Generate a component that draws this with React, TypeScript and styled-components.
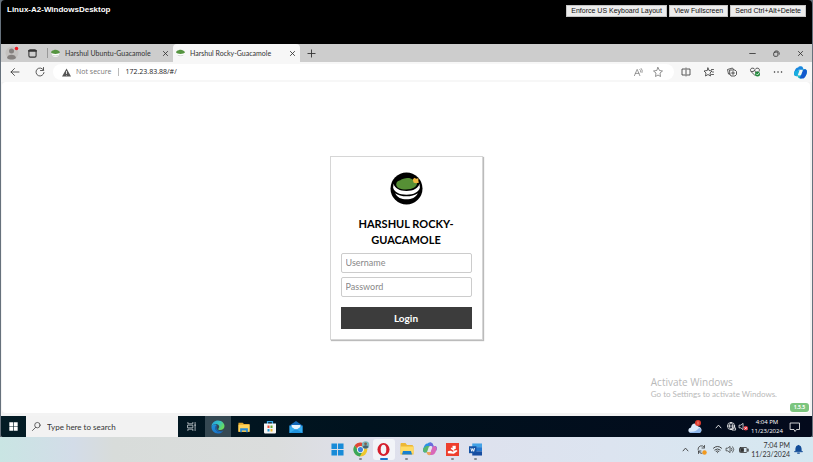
import React from "react";
import styled, { createGlobalStyle } from "styled-components";

const ui = `"Open Sans", "Noto Sans", sans-serif`;
const narrow = `Lato, "Open Sans", sans-serif`;
const arial = `"Liberation Sans", Arial, sans-serif`;

const GlobalStyle = createGlobalStyle`
  *, *::before, *::after { box-sizing: border-box; }
  body { margin: 0; font-family: ${ui}; background: #66717c; }
  button, input { font: inherit; margin: 0; }
  svg { display: block; overflow: visible; flex: none; }
`;

const Desktop = styled.div`
  min-height: 100vh;
  display: flex;
  flex-direction: column;
`;

const RemoteWindow = styled.main`
  flex: 1;
  margin: 0 1px;
  display: flex;
  flex-direction: column;
  background: #000;
  border-radius: 4px 4px 3px 3px;
  overflow: hidden;
`;

const ConsoleHeader = styled.header`
  height: 44px;
  flex: none;
  display: flex;
  align-items: flex-start;
  justify-content: space-between;
  padding: 5px 6px 0;
  font-family: ${arial};
`;

const MachineName = styled.h1`
  margin: 0;
  color: #fff;
  font-size: 8px;
  line-height: 10px;
`;

const ConsoleActions = styled.div`
  display: flex;
  gap: 2px;
`;

const ConsoleButton = styled.button`
  height: 12px;
  padding: 0 4px;
  border: 1px solid #c4c4c4;
  background: #ececec;
  color: #111;
  font-size: 7px;
  line-height: 10px;
  white-space: nowrap;
`;

const TabStrip = styled.div`
  height: 18px;
  flex: none;
  display: flex;
  align-items: stretch;
  background: #cdcdcd;
`;

const IconButton = styled.button<{ $width: number; $color?: string; $bg?: string }>`
  width: ${(p) => p.$width}px;
  flex: none;
  padding: 0;
  border: 0;
  display: flex;
  align-items: center;
  justify-content: center;
  color: ${(p) => p.$color ?? "#333"};
  background: ${(p) => p.$bg ?? "transparent"};
`;

const TabDivider = styled.span`
  width: 1px;
  height: 10px;
  margin: 4px 0 0 5px;
  background: #999;
`;

const Tab = styled.div<{ $active?: boolean }>`
  width: ${(p) => (p.$active ? 127 : 125)}px;
  display: flex;
  align-items: center;
  gap: 5px;
  padding: 0 0 0 3px;
  border-radius: 4px 4px 0 0;
  background: ${(p) => (p.$active ? "#f7f7f7" : "transparent")};
`;

const TabTitle = styled.span`
  flex: 1;
  color: #333;
  font-family: ${narrow};
  font-size: 7px;
  line-height: 10px;
  white-space: nowrap;
`;

const Spacer = styled.div`
  flex: 1;
`;

const Toolbar = styled.div`
  height: 20px;
  flex: none;
  display: flex;
  align-items: stretch;
  background: #f7f7f7;
`;

const AddressBar = styled.div`
  flex: 1;
  height: 16px;
  margin: 2px 0 2px 2px;
  display: flex;
  align-items: center;
  padding: 0 6px 0 9px;
  border-radius: 8px;
  background: #fff;
  font-size: 7px;
  line-height: 10px;
`;

const Security = styled.span`
  margin: 0 6px 0 5px;
  color: #777;
  white-space: nowrap;
`;

const AddressDivider = styled.span`
  width: 1px;
  height: 8px;
  margin-right: 7px;
  background: #bbb;
`;

const AddressInput = styled.input`
  flex: 1;
  min-width: 0;
  padding: 0;
  border: 0;
  outline: 0;
  background: transparent;
  color: #222;
`;

const Viewport = styled.div`
  flex: 1;
  display: flex;
  padding: 0 2px 3px 1px;
  background: #f3f3f3;
`;

const WebPage = styled.section`
  flex: 1;
  display: grid;
  place-items: center;
  position: relative;
  border-radius: 4px;
  background: #fff;
`;

const LoginForm = styled.form`
  width: 153px;
  display: flex;
  flex-direction: column;
  padding: 15px 10px 10px;
  border: 1px solid #d6d6d6;
  box-shadow: 1px 1px 1px #bbb;
  font-family: ${narrow};
`;

const LogoBox = styled.div`
  display: flex;
  justify-content: center;
  margin-bottom: 11px;
`;

const LoginTitle = styled.h2`
  margin: 0 0 5px;
  padding: 0 12px;
  color: #000;
  font-size: 11px;
  line-height: 16px;
  text-align: center;
`;

const Field = styled.input`
  width: 100%;
  height: 20px;
  margin-bottom: 4px;
  padding: 0 4px;
  border: 1px solid #ccc;
  border-radius: 2px;
  font-size: 9px;
  &::placeholder { color: #888; opacity: 1; }
`;

const LoginButton = styled.button`
  height: 22px;
  margin-top: 6px;
  padding: 0;
  border: 0;
  background: #3c3c3c;
  color: #fff;
  font-size: 10px;
  font-weight: 700;
`;

const Watermark = styled.aside`
  position: absolute;
  right: 33px;
  bottom: 13px;
  color: #b9b9b9;
  font-family: ${narrow};
  font-size: 8px;
  line-height: 12px;
  white-space: nowrap;
`;

const WatermarkTitle = styled.div`
  font-family: ${ui};
  font-size: 10px;
`;

const Version = styled.span`
  position: absolute;
  right: 1px;
  bottom: 1px;
  width: 19px;
  border-radius: 3px;
  background: #7cc57e;
  color: #fff;
  font-size: 5px;
  font-weight: 700;
  line-height: 9px;
  text-align: center;
`;

const GuestTaskbar = styled.nav`
  height: 21px;
  flex: none;
  display: flex;
  align-items: stretch;
  background: linear-gradient(90deg, #031c25, #00121e 45%, #030a1c);
`;

const SearchBox = styled.label`
  width: 152px;
  display: flex;
  align-items: center;
  gap: 6px;
  padding-left: 6px;
  background: #f2f2f2;
  color: #333;
`;

const SearchInput = styled.input`
  flex: 1;
  min-width: 0;
  padding: 0;
  border: 0;
  outline: 0;
  background: transparent;
  font-family: ${narrow};
  font-size: 8px;
  &::placeholder { color: #333; opacity: 1; }
`;

const Clock = styled.time<{ $host?: boolean }>`
  width: ${(p) => (p.$host ? 40 : 36)}px;
  align-self: center;
  color: ${(p) => (p.$host ? "#333" : "#fff")};
  font-family: ${(p) => (p.$host ? narrow : ui)};
  font-size: ${(p) => (p.$host ? 7 : 6)}px;
  line-height: 9px;
  text-align: ${(p) => (p.$host ? "right" : "center")};
  white-space: nowrap;
`;

const HostTaskbar = styled.nav`
  height: 25px;
  flex: none;
  display: grid;
  grid-template-columns: 1fr auto 1fr;
  background: linear-gradient(90deg, #c9e5e3, #d3dce8 9%, #d8dcda 14%, #dbdddd 34%, #dfe0ec 46%, #dce4f0 75%, #d5e8f1);
`;

const HostApps = styled.div`
  grid-column: 2;
  display: flex;
  gap: 1px;
`;

const HostApp = styled.button<{ $state?: "open" | "active" }>`
  width: 22px;
  height: 21px;
  margin-top: 2px;
  padding: 0 0 1px;
  border: 0;
  border-radius: 3px;
  display: flex;
  align-items: center;
  justify-content: center;
  position: relative;
  background: ${(p) => (p.$state === "active" ? "#f2f4f8" : "transparent")};
  &::after {
    content: "";
    position: absolute;
    bottom: 0;
    width: ${(p) => (p.$state === "active" ? 8 : p.$state ? 3 : 0)}px;
    height: 2px;
    border-radius: 1px;
    background: ${(p) => (p.$state === "active" ? "#1673cc" : "#858990")};
  }
`;

const Tray = styled.div`
  display: flex;
  justify-content: flex-end;
  align-items: stretch;
  padding-right: 7px;
`;

type IconProps = { size?: number; children: React.ReactNode };
const Line = ({ size = 10, children }: IconProps) => (
  <svg width={size} height={size} viewBox="0 0 20 20" fill="none" stroke="currentColor" strokeWidth="1.6" strokeLinecap="round" strokeLinejoin="round" aria-hidden="true">{children}</svg>
);
const Art = ({ size = 14, children }: IconProps) => (
  <svg width={size} height={size} viewBox="0 0 28 28" aria-hidden="true">{children}</svg>
);

const Bowl = () => (
  <Art size={9}>
    <path d="M2 12h24c0 9-5 13-12 13S2 21 2 12Z" fill="#fff" />
    <path d="M0 10c1-4 5-5 8-6 5-2 10-2 14 1 3 1 5 3 6 5-3 7-25 7-28 0Z" fill="#559440" />
    <path d="M5 19c4 3 14 3 18 0" fill="none" stroke="#b7bdb8" strokeWidth="2" />
  </Art>
);

const Logo = () => (
  <svg width="33" height="33" viewBox="0 0 64 64" role="img" aria-label="Guacamole">
    <circle cx="32" cy="32" r="31" fill="#000" />
    <path d="M7 23c2 9 12 14 25 14s23-5 25-14l1 7c-2 9-12 14-26 14S8 39 6 30Z" fill="#fff" />
    <path d="M10 41c10 8 34 8 44 0-4 8-12 12-22 12S14 49 10 41Z" fill="#fff" />
    <path d="M12 24c0-5 4-7 8-8 2-3 7-3 11-4 5-1 10 0 13 3 4 0 5 4 8 6 2 7-8 13-21 13-11 0-19-4-19-10Z" fill="#568f35" />
    <path d="m44 15 3-4 4 2 4-1v5l1 4-5 1-5-1Z" fill="#f0b83f" />
  </svg>
);

const Warning = () => (
  <svg width="9" height="9" viewBox="0 0 18 18" aria-hidden="true">
    <path d="M9 1 18 17H0Z" fill="#555" />
    <path d="M9 6v6m0 2v1" stroke="#fff" strokeWidth="1.6" />
  </svg>
);

const Profile = () => (
  <Art size={14}>
    <circle cx="14" cy="14" r="13" fill="#c4c2c0" />
    <circle cx="13" cy="10" r="5" fill="#85817f" />
    <path d="M4 24c0-9 18-9 18 0-4 4-14 4-18 0Z" fill="#85817f" />
    <circle cx="23" cy="5" r="3.5" fill="#ee1822" />
  </Art>
);

const Close = () => <Line size={7}><path d="m4 4 12 12M16 4 4 16" strokeWidth="2.4" /></Line>;
const Chevron = () => <Line size={7}><path d="m3 14 7-8 7 8" strokeWidth="2.4" /></Line>;

const Copilot = () => (
  <Art size={13}>
    <path d="M9 3c2-3 8-3 10 0l2 5H10L5 22C0 22-1 17 1 12 3 6 5 3 9 3Z" fill="#1787df" />
    <path d="M1 12c-2 7 0 10 4 10h4l4-13H7Z" fill="#19aee0" />
    <path d="M19 25c-2 3-8 3-10 0l-2-5h6L19 7h4c5 0 6 5 4 10-2 5-4 8-8 8Z" fill="#23bec7" />
    <path d="M9 25c7 4 7-18 14-18 5 0 6 5 4 10-3 7-5 11-12 10Z" fill="#1459ce" />
    <path d="m12 9-4 11h7l4-11Z" fill="#f7f7f7" />
  </Art>
);

const ColorCopilot = () => (
  <Art size={14}>
    <path d="M9 3c2-3 8-3 10 0l2 5H10L5 21C0 21-1 17 1 12 3 6 5 3 9 3Z" fill="#2a91e5" />
    <path d="M1 12c-2 7 0 9 4 9h5l4-13H7Z" fill="#58b66d" />
    <path d="M14 1c4 0 6 3 7 7h2c5 0 6 4 4 9h-6L17 8h-5Z" fill="#7067db" />
    <path d="M21 8h3c4 2 4 6 2 10-2 5-4 8-9 8h-4l4-13Z" fill="#d868b8" />
    <path d="M7 20h9l-2 6c-3 2-6-1-7-6Z" fill="#eca35d" />
    <path d="m12 9-4 11h7l4-11Z" fill="#e5e3ee" />
  </Art>
);

const Windows = ({ color, size = 10 }: { color: string; size?: number }) => (
  <Art size={size}><path d="M1 1h12v12H1Zm14 0h12v12H15ZM1 15h12v12H1Zm14 0h12v12H15Z" fill={color} /></Art>
);

const EdgeLogo = () => (
  <Art size={14}>
    <defs>
      <linearGradient id="edgeTop" x2="1" y2=".5"><stop stopColor="#249ddd" /><stop offset=".55" stopColor="#35c3c3" /><stop offset="1" stopColor="#69dc5b" /></linearGradient>
      <linearGradient id="edgeSide" y2="1"><stop stopColor="#2296dd" /><stop offset="1" stopColor="#1565c0" /></linearGradient>
    </defs>
    <path d="M1 14C1 6 7 1 14 1c8 0 13 6 13 11 0 5-4 8-9 8-3 0-4-1-3-3 4-5-1-10-7-9-4 1-6 3-7 6Z" fill="url(#edgeTop)" />
    <path d="M1 14c2-5 7-7 11-4-5 2-5 13 4 14 4 0 7-1 9-3-3 5-7 6-11 6C6 27 1 21 1 14Z" fill="url(#edgeSide)" />
    <path d="M12 10c-5 2-5 13 4 14 4 0 7-1 9-3-7 4-17-1-13-11Z" fill="#1769b4" />
  </Art>
);

const Folder = ({ size = 14 }: { size?: number }) => (
  <Art size={size}>
    <path d="M1 4h10l3 3h13v18H1Z" fill="#e2a72d" />
    <path d="M1 9h26v16H1Z" fill="#ffd45c" />
    <path d="M5 17h18v9h-4v-4H9v4H5Z" fill="#278bd8" />
  </Art>
);

const HostFolder = () => (
  <Art size={14}>
    <path d="M1 4c0-1 1-2 2-2h8l3 4h11l2 3v16H1Z" fill="#edb735" />
    <path d="M1 9h26v14H1Z" fill="#ffdb65" />
    <path d="M6 18h16l2 7H4Z" fill="#1780cf" />
  </Art>
);

const Store = () => (
  <Art size={14}>
    <path d="M9 8V3h10v5" fill="none" stroke="#38a9e8" strokeWidth="2.5" />
    <path d="M2 7h24v17c0 2-1 3-3 3H5c-2 0-3-1-3-3Z" fill="#f5f5f5" />
    <path d="M9 11h4v5H9Z" fill="#e94b36" /><path d="M15 11h4v5h-4Z" fill="#65aa35" />
    <path d="M9 18h4v5H9Z" fill="#249bd7" /><path d="M15 18h4v5h-4Z" fill="#efb92d" />
  </Art>
);

const Mail = () => (
  <Art size={14}>
    <path d="M1 11 14 2l13 9v15H1Z" fill="#1269b8" />
    <path d="M5 10h18v6l-9 5-9-5Z" fill="#e8f5fc" />
    <path d="m1 11 13 9 13-9v15H1Z" fill="#35adf0" />
    <path d="m1 26 13-8 13 8Z" fill="#1f93df" />
  </Art>
);

const Cloud = () => (
  <Art size={14}>
    <path d="M7 26c-8 0-8-10-1-11C7 5 18 4 20 13c8 0 10 12 2 13Z" fill="#d9e9fb" />
    <path d="M3 23c7 2 15-1 20-8 5 4 4 11-1 11H7c-2 0-3-1-4-3Z" fill="#8fb8ed" />
    <circle cx="20" cy="6" r="6" fill="#dc3a2e" /><path d="M20 3v6" stroke="#f6b0aa" strokeWidth="1.5" />
  </Art>
);

const Chrome = () => (
  <Art size={16}>
    <circle cx="13" cy="15" r="12" fill="#efc72e" />
    <path d="M3 8a12 12 0 0 1 20 0l-10 1-4 7Z" fill="#df4638" />
    <path d="M3 8a12 12 0 0 0 9 19l5-9-8-1Z" fill="#3ba75a" />
    <circle cx="13" cy="15" r="6" fill="#fff" /><circle cx="13" cy="15" r="4.5" fill="#3f82dc" />
    <circle cx="22" cy="7" r="6.5" fill="#7cb9bd" /><circle cx="22" cy="5" r="2.5" fill="#80604f" /><path d="M17 11c1-5 9-5 10 0-3 3-7 3-10 0Z" fill="#456272" />
  </Art>
);

const Opera = () => (
  <Art size={13}>
    <ellipse cx="14" cy="14" rx="13" ry="14" fill="#d51e2c" />
    <ellipse cx="14" cy="14" rx="6" ry="10" fill="#f2f4f8" />
  </Art>
);

const RedApp = () => (
  <Art size={13}>
    <path d="M0 0h28v28H0Z" fill="#ee3e2d" />
    <path d="M4 18c5-3 8-1 10 1l8-4 3 2-8 6-13-1Z" fill="#fff" /><path d="M14 6h7v7h-7Z" fill="#fff" /><path d="m11 11 7 5" stroke="#fff" strokeWidth="3" />
  </Art>
);

const Word = () => (
  <Art size={13}>
    <path d="M7 1h21v8H7Z" fill="#43a2e6" /><path d="M7 9h21v9H7Z" fill="#2678cf" /><path d="M7 18h21v9H7Z" fill="#174ea1" />
    <path d="M0 7h16v15H0Z" fill="#1553a5" /><path d="m4 11 2 7 2-6 2 6 2-7" fill="none" stroke="#fff" strokeWidth="2" />
  </Art>
);

const Speaker = ({ muted }: { muted?: boolean }) => (
  <Line size={9}>
    <path d="M1 7h3l5-4v14l-5-4H1Z" />
    {muted ? <><circle cx="15" cy="14" r="5" fill="#e8343f" stroke="none" /><path d="m13 12 4 4m0-4-4 4" stroke="#fff" /></> : <path d="M12 7q3 3 0 6M15 4q5 6 0 12" />}
  </Line>
);

const browserTools = [
  { label: "Split screen", icon: <Line><path d="M8 4H2v12h6M12 4h6v12h-6M10 2v16" /></Line> },
  { label: "Favorites", icon: <Line><path d="m8 2 2 5 6 1-4 4 1 6-5-3-5 3 1-6-4-4 6-1ZM15 5h4m-2 5h2m-4 5h4" /></Line> },
  { label: "Collections", icon: <Line><path d="M6 14H3L1 5l10-3 2 3M6 6h10l3 3v6l-3 3H8l-2-3ZM12 9v6m-3-3h6" /></Line> },
  { label: "Browser essentials", icon: <Line><path d="M10 17 2 9c-4-7 5-9 8-4 3-5 12-3 8 4M3 9h4l2-3 3 6 2-3" /><circle cx="15" cy="14" r="5" fill="#20893b" stroke="none" /><path d="m13 14 2 2 3-4" stroke="#fff" /></Line> },
  { label: "More", icon: <Line><path d="M3 10h.1M10 10h.1M17 10h.1" strokeWidth="3" /></Line> },
  { label: "Copilot", icon: <Copilot /> },
];

const windowControls = [
  { label: "Minimize", icon: <Line size={7}><path d="M2 10h16" strokeWidth="2.4" /></Line> },
  { label: "Restore", icon: <Line size={7}><rect x="2" y="6" width="12" height="12" rx="3" strokeWidth="2.4" /><path d="M7 3q11-3 11 9" strokeWidth="2.4" /></Line> },
  { label: "Close window", icon: <Close /> },
];

const hostApps: { label: string; icon: React.ReactNode; state?: "open" | "active" }[] = [
  { label: "Start", icon: <Windows color="#188bd8" size={13} /> },
  { label: "Chrome", icon: <Chrome />, state: "open" },
  { label: "Opera", icon: <Opera />, state: "active" },
  { label: "File Explorer", icon: <HostFolder />, state: "open" },
  { label: "Copilot", icon: <ColorCopilot /> },
  { label: "Assistant", icon: <RedApp />, state: "open" },
  { label: "Word", icon: <Word />, state: "open" },
];

export default function App() {
  return (
    <Desktop>
      <GlobalStyle />
      <RemoteWindow>
        <ConsoleHeader>
          <MachineName>Linux-A2-WindowsDesktop</MachineName>
          <ConsoleActions>
            <ConsoleButton>Enforce US Keyboard Layout</ConsoleButton>
            <ConsoleButton>View Fullscreen</ConsoleButton>
            <ConsoleButton>Send Ctrl+Alt+Delete</ConsoleButton>
          </ConsoleActions>
        </ConsoleHeader>
        <TabStrip>
          <IconButton $width={22} aria-label="Profile"><Profile /></IconButton>
          <IconButton $width={19} aria-label="Tab actions"><Line size={9}><rect x="2" y="2" width="16" height="16" rx="3" strokeWidth="2.4" /><path d="M2 4h16" strokeWidth="4" /></Line></IconButton>
          <TabDivider />
          <Tab>
            <Bowl /><TabTitle>Harshul Ubuntu-Guacamole</TabTitle>
            <IconButton $width={16} aria-label="Close Ubuntu tab"><Close /></IconButton>
          </Tab>
          <Tab $active>
            <Bowl /><TabTitle>Harshul Rocky-Guacamole</TabTitle>
            <IconButton $width={16} aria-label="Close Rocky tab"><Close /></IconButton>
          </Tab>
          <IconButton $width={22} aria-label="New tab"><Line size={9}><path d="M10 2v16M2 10h16" strokeWidth="2" /></Line></IconButton>
          <Spacer />
          {windowControls.map((c) => <IconButton key={c.label} $width={24} aria-label={c.label}>{c.icon}</IconButton>)}
        </TabStrip>
        <Toolbar>
          <IconButton $width={27} aria-label="Back"><Line><path d="M18 10H2m7-7-7 7 7 7" /></Line></IconButton>
          <IconButton $width={23} aria-label="Reload"><Line><path d="M17 6a8 8 0 1 0 1 5M17 1v6h-6" /></Line></IconButton>
          <AddressBar>
            <Warning />
            <Security>Not secure</Security>
            <AddressDivider />
            <AddressInput aria-label="Address" defaultValue="172.23.83.88/#/" />
            <IconButton $width={20} $color="#777" aria-label="Read aloud"><Line size={9}><path d="m1 17 6-14 6 14M3 12h8M13 3q3 2 2 6M16 1q4 4 2 9" /></Line></IconButton>
            <IconButton $width={20} $color="#777" aria-label="Add favorite"><Line><path d="m10 1 3 6 6 1-5 4 1 7-5-3-5 3 1-7-5-4 6-1Z" /></Line></IconButton>
          </AddressBar>
          {browserTools.map((t) => <IconButton key={t.label} $width={23} aria-label={t.label}>{t.icon}</IconButton>)}
        </Toolbar>
        <Viewport>
          <WebPage>
            <LoginForm onSubmit={(e) => e.preventDefault()}>
              <LogoBox><Logo /></LogoBox>
              <LoginTitle>HARSHUL ROCKY-GUACAMOLE</LoginTitle>
              <Field aria-label="Username" placeholder="Username" />
              <Field aria-label="Password" type="password" placeholder="Password" />
              <LoginButton type="submit">Login</LoginButton>
            </LoginForm>
            <Watermark>
              <WatermarkTitle>Activate Windows</WatermarkTitle>
              Go to Settings to activate Windows.
            </Watermark>
            <Version>1.5.5</Version>
          </WebPage>
        </Viewport>
        <GuestTaskbar aria-label="Remote taskbar">
          <IconButton $width={25} aria-label="Remote start"><Windows color="#fff" size={9} /></IconButton>
          <SearchBox>
            <Line size={9}><circle cx="12" cy="7" r="6" /><path d="m8 12-7 7" /></Line>
            <SearchInput aria-label="Type here to search" placeholder="Type here to search" />
          </SearchBox>
          <IconButton $width={27} $color="#dce2e4" aria-label="Task view"><Line size={9}><path d="M2 1v3h11V1M2 19v-3h11v3M2 7h11v6H2ZM18 1v18M17 7h2" /></Line></IconButton>
          <IconButton $width={26} $bg="#354852" aria-label="Edge"><EdgeLogo /></IconButton>
          <IconButton $width={26} aria-label="Remote files"><Folder size={12} /></IconButton>
          <IconButton $width={26} aria-label="Store"><Store /></IconButton>
          <IconButton $width={26} aria-label="Mail"><Mail /></IconButton>
          <Spacer />
          <IconButton $width={32} aria-label="Weather"><Cloud /></IconButton>
          <IconButton $width={14} $color="#fff" aria-label="Remote hidden icons"><Chevron /></IconButton>
          <IconButton $width={12} $color="#fff" aria-label="Network"><Line size={9}><circle cx="9" cy="9" r="8" /><path d="M1 9h16M9 1q-8 8 0 16M9 1q8 8 0 16M12 13h7v5h-7Z" /></Line></IconButton>
          <IconButton $width={12} $color="#fff" aria-label="Muted"><Speaker muted /></IconButton>
          <Clock>4:04 PM<br />11/23/2024</Clock>
          <IconButton $width={20} $color="#fff" aria-label="Notifications"><Line size={10}><path d="M1 2h18v13h-6l-3 4-2-4H1Z" /></Line></IconButton>
          <IconButton $width={7} aria-label="Show desktop" />
        </GuestTaskbar>
      </RemoteWindow>
      <HostTaskbar aria-label="Host taskbar">
        <HostApps>
          {hostApps.map((a) => <HostApp key={a.label} $state={a.state} aria-label={a.label}>{a.icon}</HostApp>)}
        </HostApps>
        <Tray>
          <IconButton $width={16} aria-label="Hidden icons"><Chevron /></IconButton>
          <IconButton $width={18} aria-label="Updates"><Line size={10}><path d="M2 9a7 7 0 0 1 13-4V1m0 5h-5M3 17v-5h5m-5 0q2 5 7 5" /><circle cx="15" cy="15" r="4.5" fill="#f29a20" stroke="none" /></Line></IconButton>
          <IconButton $width={13} aria-label="Wi-Fi"><Line size={9}><path d="M1 7q9-8 18 0M4 11q6-5 12 0M7 14q3-2 6 0M10 17h.1" strokeWidth="2" /></Line></IconButton>
          <IconButton $width={13} aria-label="Volume"><Speaker /></IconButton>
          <IconButton $width={13} aria-label="Battery"><Line size={10}><rect x="1" y="5" width="15" height="10" rx="2" /><path d="M3 7h6v6H3Z" fill="currentColor" /><path d="M18 8v4" strokeWidth="2.5" /></Line></IconButton>
          <Clock $host>7:04 PM<br />11/23/2024</Clock>
          <IconButton $width={16} $color="#134d98" aria-label="Host notifications"><Line size={9}><path d="M10 1q6 0 6 7v4l3 3H1l3-3V8q0-7 6-7Z" fill="currentColor" /><path d="M8 18h4" strokeWidth="2.5" /></Line></IconButton>
        </Tray>
      </HostTaskbar>
    </Desktop>
  );
}
